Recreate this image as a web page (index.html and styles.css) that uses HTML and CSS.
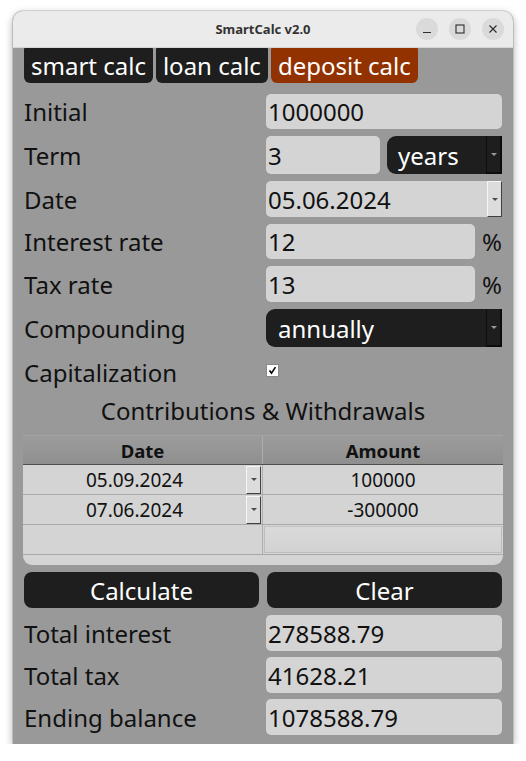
FILE: index.html
```html
<!DOCTYPE html>
<html>
<head>
<meta charset="utf-8">
<title>SmartCalc v2.0</title>
<link rel="stylesheet" href="styles.css">
</head>
<body>
<div class="window">
  <div class="titlebar">
    <span class="title">SmartCalc v2.0</span>
    <div class="controls">
      <span class="ctl"><svg width="10" height="10" viewBox="0 0 10 10"><path d="M1 8.5h8" stroke="#2e2e2e" stroke-width="1.2"/></svg></span>
      <span class="ctl"><svg width="10" height="10" viewBox="0 0 10 10"><rect x="1" y="1" width="8" height="8" fill="none" stroke="#2e2e2e" stroke-width="1.1"/></svg></span>
      <span class="ctl"><svg width="10" height="10" viewBox="0 0 10 10"><path d="M1.5 1.5l7 7M8.5 1.5l-7 7" stroke="#2e2e2e" stroke-width="1.2"/></svg></span>
    </div>
  </div>
  <div class="content">
    <div class="tabs">
      <span class="tab">smart calc</span>
      <span class="tab">loan calc</span>
      <span class="tab active">deposit calc</span>
    </div>
    <div class="form">
      <div class="row h35">
        <span class="label">Initial</span>
        <div class="field">1000000</div>
      </div>
      <div class="row h38">
        <span class="label">Term</span>
        <div class="pair">
          <div class="field">3</div>
          <div class="combo">
            <span class="combo-text">years</span>
            <span class="combo-btn"><span class="arrow light"></span></span>
          </div>
        </div>
      </div>
      <div class="row h36">
        <span class="label">Date</span>
        <div class="field date">
          <span class="date-text">05.06.2024</span>
          <span class="spin"><span class="arrow dark"></span></span>
        </div>
      </div>
      <div class="row h35">
        <span class="label">Interest rate</span>
        <div class="withunit">
          <div class="field">12</div>
          <span class="unit">%</span>
        </div>
      </div>
      <div class="row h36">
        <span class="label">Tax rate</span>
        <div class="withunit">
          <div class="field">13</div>
          <span class="unit">%</span>
        </div>
      </div>
      <div class="row h38">
        <span class="label">Compounding</span>
        <div class="combo wide">
          <span class="combo-text">annually</span>
          <span class="combo-btn"><span class="arrow light"></span></span>
        </div>
      </div>
      <div class="row h36">
        <span class="label">Capitalization</span>
        <span class="checkbox"><svg width="11" height="11" viewBox="0 0 11 11"><path d="M2.5 5.5l2 2.6 4-6" fill="none" stroke="#000" stroke-width="1.6"/></svg></span>
      </div>
      <div class="heading">Contributions &amp; Withdrawals</div>
      <div class="table">
        <div class="thead">
          <span class="th">Date</span>
          <span class="th">Amount</span>
        </div>
        <div class="tr">
          <div class="td datecell"><span class="cell-text">05.09.2024</span><span class="spin"><span class="arrow dark"></span></span></div>
          <div class="td">100000</div>
        </div>
        <div class="tr">
          <div class="td datecell"><span class="cell-text">07.06.2024</span><span class="spin"><span class="arrow dark"></span></span></div>
          <div class="td">-300000</div>
        </div>
        <div class="tr">
          <div class="td"></div>
          <div class="td editing"><span class="editbox"></span></div>
        </div>
        <div class="tfoot"></div>
      </div>
      <div class="actions">
        <span class="btn">Calculate</span>
        <span class="btn">Clear</span>
      </div>
      <div class="results">
        <div class="row h36">
          <span class="label">Total interest</span>
          <div class="field">278588.79</div>
        </div>
        <div class="row h36">
          <span class="label">Total tax</span>
          <div class="field">41628.21</div>
        </div>
        <div class="row h36">
          <span class="label">Ending balance</span>
          <div class="field">1078588.79</div>
        </div>
      </div>
    </div>
  </div>
</div>
</body>
</html>
```

FILE: styles.css
```css
* { box-sizing: border-box; }

body {
  margin: 0;
  background: #ffffff;
  font-family: "Noto Sans", "Open Sans", sans-serif;
}

.window {
  margin: 11px 0 0 13px;
  width: 500px;
  background: #999999;
  border-radius: 10px 10px 0 0;
  box-shadow: 0 3px 9px rgba(0, 0, 0, 0.35), 0 0 0 1px rgba(0, 0, 0, 0.12);
  overflow: hidden;
}

.titlebar {
  height: 37px;
  background: #ebebeb;
  display: grid;
  grid-template-columns: 1fr auto 1fr;
  align-items: center;
  border-bottom: 1px solid #d6d6d6;
}

.title {
  grid-column: 2;
  font-weight: 700;
  font-size: 13px;
  color: #333333;
}

.controls {
  justify-self: end;
  display: flex;
  gap: 11px;
  padding-right: 9px;
}

.ctl {
  width: 22px;
  height: 22px;
  border-radius: 50%;
  background: #dadada;
  display: flex;
  align-items: center;
  justify-content: center;
}

.content {
  padding: 0 11px 9px 11px;
}

.tabs {
  display: flex;
  gap: 3px;
  height: 35px;
}

.tab {
  background: #1e1e1e;
  color: #ffffff;
  font-size: 24px;
  line-height: 35px;
  padding: 0 7px;
  border-radius: 1px 1px 6px 6px;
}

.tab.active {
  background: #923200;
}

.form {
  display: flex;
  flex-direction: column;
  gap: 7px;
  margin-top: 11px;
}

.row {
  display: grid;
  grid-template-columns: 242px 1fr;
  align-items: center;
}

.h35 { height: 35px; }
.h36 { height: 36px; }
.h38 { height: 38px; }

.label {
  font-size: 24px;
  color: #111111;
}

.field {
  height: 100%;
  background: #d4d4d4;
  border-radius: 5px;
  font-size: 24px;
  color: #111111;
  padding-left: 2px;
  display: flex;
  align-items: center;
}

.pair {
  height: 100%;
  display: grid;
  grid-template-columns: 114px 1fr;
  gap: 7px;
}

.combo {
  height: 100%;
  background: #1e1e1e;
  border-radius: 9px 0 0 9px;
  color: #ffffff;
  font-size: 24px;
  display: flex;
  align-items: stretch;
}

.combo-text {
  flex: 1;
  display: flex;
  align-items: center;
  padding-left: 11px;
}

.combo-btn {
  width: 16px;
  border-left: 1px solid #0e0e0e;
  border-right: 2px solid #0c0c0c;
  border-bottom: 2px solid #0c0c0c;
  display: flex;
  align-items: center;
  justify-content: center;
}

.combo.wide .combo-text {
  padding-left: 12px;
}

.arrow {
  width: 0;
  height: 0;
  border-left: 3px solid transparent;
  border-right: 3px solid transparent;
  border-top: 3px solid #9a9a9a;
}

.arrow.dark {
  border-top-color: #4a4a4a;
}

.field.date {
  padding-right: 0;
  border-radius: 5px 0 0 5px;
}

.date-text {
  flex: 1;
}

.spin {
  width: 15px;
  height: 100%;
  background: #dcdcdc;
  border-top: 1px solid #f6f6f6;
  border-left: 1px solid #f6f6f6;
  border-right: 1px solid #404040;
  border-bottom: 1px solid #404040;
  display: flex;
  align-items: center;
  justify-content: center;
}

.withunit {
  height: 100%;
  display: flex;
  align-items: center;
  gap: 7px;
}

.withunit .field {
  flex: 1;
}

.unit {
  font-size: 24px;
  color: #111111;
  width: 20px;
  text-align: right;
}

.checkbox {
  width: 13px;
  height: 13px;
  background: #ffffff;
  border: 1px solid #8a8a8a;
  display: flex;
  align-items: center;
  justify-content: center;
  margin-top: -3px;
}

.heading {
  height: 31px;
  font-size: 24px;
  color: #111111;
  text-align: center;
  line-height: 28px;
}

.table {
  margin: 0 -1px;
  border-radius: 0 0 9px 9px;
  overflow: hidden;
  background: #d4d4d4;
}

.thead,
.tr {
  display: grid;
  grid-template-columns: 240px 1fr;
}

.thead {
  height: 30px;
  border-top: 1px solid #a3a3a3;
  border-bottom: 1px solid #4f4f4f;
  background: linear-gradient(#9c9c9c, #8f8f8f);
}

.th {
  font-weight: 700;
  font-size: 18.5px;
  color: #111111;
  display: flex;
  align-items: center;
  justify-content: center;
}

.th:first-child {
  border-right: 1px solid #acacac;
}

.tr {
  height: 30px;
  border-bottom: 1px solid #a9a9a9;
}

.td {
  font-size: 19px;
  color: #111111;
  display: flex;
  align-items: center;
  justify-content: center;
}

.td:first-child {
  border-right: 1px solid #aeaeae;
}

.datecell {
  justify-content: flex-start;
  padding-right: 1px;
}

.cell-text {
  flex: 1;
  text-align: center;
}

.datecell .spin {
  height: 28px;
  width: 15px;
}

.td.editing {
  padding: 1px;
  align-items: stretch;
  justify-content: stretch;
}

.editbox {
  flex: 1;
  border: 1px solid #bdbdbd;
  border-top-color: #c4c4c4;
  background: linear-gradient(#dadada, #d2d2d2);
}

.tfoot {
  height: 10px;
}

.actions {
  display: grid;
  grid-template-columns: 1fr 1fr;
  gap: 8px;
  height: 36px;
}

.btn {
  background: #1e1e1e;
  border-radius: 8px;
  color: #ffffff;
  font-size: 24px;
  display: flex;
  align-items: center;
  justify-content: center;
}

.results {
  display: flex;
  flex-direction: column;
  gap: 6px;
}
```
